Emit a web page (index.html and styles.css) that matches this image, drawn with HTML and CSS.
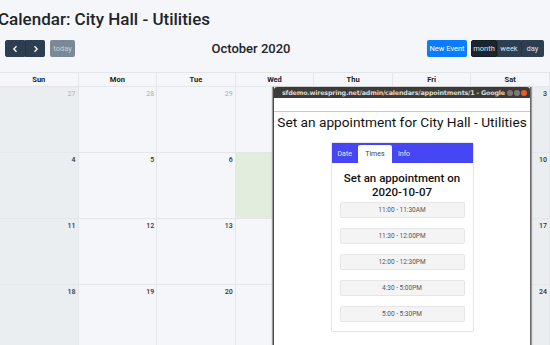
FILE: index.html
```html
<!DOCTYPE html>
<html lang="en">
<head>
  <meta charset="UTF-8">
  <title>Calendar: City Hall - Utilities</title>
  <link rel="stylesheet" href="styles.css">
</head>
<body>

  <h1 class="page-title">Calendar: City Hall - Utilities</h1>

  <div class="toolbar">
    <div class="tb-left">
      <div class="btn-group">
        <button class="btn btn-dark">
          <svg width="7" height="8" viewBox="0 0 7 8"><path d="M4.5 1.2 L1.8 4 L4.5 6.8" fill="none" stroke="#fff" stroke-width="1.3"/></svg>
        </button>
        <button class="btn btn-dark">
          <svg width="7" height="8" viewBox="0 0 7 8"><path d="M2.5 1.2 L5.2 4 L2.5 6.8" fill="none" stroke="#fff" stroke-width="1.3"/></svg>
        </button>
      </div>
      <button class="btn btn-today">today</button>
    </div>
    <h2 class="cal-title">October 2020</h2>
    <div class="tb-right">
      <button class="btn btn-primary">New Event</button>
      <div class="btn-group view-group">
        <button class="btn btn-dark active">month</button>
        <button class="btn btn-dark">week</button>
        <button class="btn btn-dark">day</button>
      </div>
    </div>
  </div>

  <div class="calendar">
    <div class="dow">Sun</div>
    <div class="dow">Mon</div>
    <div class="dow">Tue</div>
    <div class="dow">Wed</div>
    <div class="dow">Thu</div>
    <div class="dow">Fri</div>
    <div class="dow">Sat</div>

    <div class="day weekend other">27</div>
    <div class="day other">28</div>
    <div class="day other">29</div>
    <div class="day other">30</div>
    <div class="day">1</div>
    <div class="day">2</div>
    <div class="day weekend">3</div>

    <div class="day weekend">4</div>
    <div class="day">5</div>
    <div class="day">6</div>
    <div class="day today">7</div>
    <div class="day">8</div>
    <div class="day">9</div>
    <div class="day weekend">10</div>

    <div class="day weekend">11</div>
    <div class="day">12</div>
    <div class="day">13</div>
    <div class="day">14</div>
    <div class="day">15</div>
    <div class="day">16</div>
    <div class="day weekend">17</div>

    <div class="day weekend">18</div>
    <div class="day">19</div>
    <div class="day">20</div>
    <div class="day">21</div>
    <div class="day">22</div>
    <div class="day">23</div>
    <div class="day weekend">24</div>
  </div>

  <!-- popup browser window -->
  <div class="popup">
    <div class="popup-bar">
      <span class="popup-url">sfdemo.wirespring.net/admin/calendars/appointments/1 - Google Chrome</span>
      <span class="win-btn"></span>
      <span class="win-btn"></span>
      <span class="win-btn close"></span>
    </div>
    <div class="popup-strip"></div>
    <div class="popup-body">
      <h2 class="appt-title">Set an appointment for City Hall - Utilities</h2>
      <div class="card">
        <div class="tabs">
          <span class="tab">Date</span>
          <span class="tab active">Times</span>
          <span class="tab">Info</span>
        </div>
        <div class="card-body">
          <h3 class="card-title">Set an appointment on<br>2020-10-07</h3>
          <div class="slot">11:00 - 11:30AM</div>
          <div class="slot">11:30 - 12:00PM</div>
          <div class="slot">12:00 - 12:30PM</div>
          <div class="slot">4:30 - 5:00PM</div>
          <div class="slot">5:00 - 5:30PM</div>
        </div>
      </div>
    </div>
  </div>

</body>
</html>
```

FILE: styles.css
```css
body {
  margin: 0;
  width: 550px;
  height: 345px;
  overflow: hidden;
  position: relative;
  font-family: Roboto, "Liberation Sans", sans-serif;
  background-color: #f5f6fa;
  color: #212529;
}
.page-title {
  margin: 8px 0 0 -2px;
  font-size: 17px;
  line-height: 22px;
  font-weight: 500;
}
.toolbar {
  display: flex;
  justify-content: space-between;
  align-items: center;
  margin-top: 10px;
  padding: 0 6px 0 5px;
  height: 17px;
}
.tb-left, .tb-right {
  display: flex;
  gap: 5px;
}
.tb-right {
  gap: 4px;
}
.btn-group {
  display: flex;
}
.btn {
  height: 17px;
  border: 1px solid transparent;
  border-radius: 2px;
  font-family: Roboto, "Liberation Sans", sans-serif;
  font-size: 7.5px;
  padding: 0;
  color: #fff;
  display: flex;
  align-items: center;
  justify-content: center;
}
.btn-dark {
  background-color: #2c3e50;
  border-color: #2c3e50;
  color: #dfe3e8;
}
.btn-group .btn {
  border-radius: 0;
}
.btn-group .btn:first-child {
  border-radius: 2px 0 0 2px;
}
.btn-group .btn:last-child {
  border-radius: 0 2px 2px 0;
}
.btn-group .btn + .btn {
  border-left-color: #243444;
}
.tb-left .btn-dark {
  width: 20px;
}
.view-group .btn:nth-child(1) {
  width: 26px;
}
.view-group .btn:nth-child(2) {
  width: 24px;
}
.view-group .btn:nth-child(3) {
  width: 23px;
}
.btn-dark.active {
  background-color: #1a252f;
  border-color: #151e26;
}
.btn-today {
  background-color: #7b8896;
  color: #c9cfd6;
  width: 25px;
}
.btn-primary {
  background-color: #0a7cff;
  color: #fff;
  width: 40px;
}
.cal-title {
  margin: 0;
  font-size: 13px;
  font-weight: 500;
}
.calendar {
  display: grid;
  grid-template-columns: repeat(7, 1fr);
  grid-template-rows: 14px;
  grid-auto-rows: 66px;
  margin-top: 15px;
  border-top: 1px solid #e4e6ea;
}
.dow {
  font-size: 7.5px;
  font-weight: 700;
  text-align: center;
  line-height: 13px;
  border-right: 1px solid #e4e6ea;
  border-bottom: 1px solid #e4e6ea;
  color: #222;
}
.day {
  font-size: 7px;
  font-weight: 500;
  text-align: right;
  padding: 3px 2px 0 0;
  border-right: 1px solid #e4e6ea;
  border-bottom: 1px solid #e4e6ea;
  color: #333;
}
.day.weekend {
  background-color: #ebeef0;
}
.day.other {
  color: #b8bcc2;
}
.day.today {
  background-color: #e3eddd;
}

/* popup window */
.popup {
  position: absolute;
  left: 273px;
  top: 87px;
  width: 256px;
  height: 270px;
  background-color: #fff;
  border-left: 1px solid #4a4945;
  border-right: 1px solid #6a6a6a;
  box-shadow: -1px 0 1px #9a9a9a, 1px 0 1px #9a9a9a;
}
.popup-bar {
  display: flex;
  align-items: center;
  height: 11px;
  background-color: #3c3b37;
  padding: 0 3px 0 8px;
  border-radius: 3px 3px 0 0;
}
.popup-url {
  flex: 1;
  overflow: hidden;
  white-space: nowrap;
  font-family: "DejaVu Sans", sans-serif;
  font-size: 6.4px;
  font-weight: 700;
  letter-spacing: -0.2px;
  color: #dcd9d2;
}
.win-btn {
  width: 6px;
  height: 6px;
  border-radius: 50%;
  background-color: #7a7975;
  margin-left: 1px;
}
.win-btn.close {
  background-color: #ea5b26;
}
.popup-strip {
  height: 13px;
  border-bottom: 1px solid #c8c8c8;
}
.popup-body {
  padding-top: 1px;
}
.appt-title {
  margin: 0;
  font-size: 13.7px;
  line-height: 18px;
  font-weight: 400;
  text-align: center;
  color: #111;
}
.card {
  width: 141px;
  margin: 11px auto 0;
  border: 1px solid #e6e6e6;
  border-radius: 2px;
}
.tabs {
  display: flex;
  align-items: flex-end;
  height: 20px;
  background-color: #4646f5;
}
.tab {
  font-size: 7px;
  color: #e8e8ff;
  padding: 0 6px;
  line-height: 18px;
}
.tab.active {
  background-color: #fff;
  color: #444;
  width: 34px;
  padding: 0;
  text-align: center;
  border-radius: 2px 2px 0 0;
}
.card-body {
  padding: 8px 8px 9px;
}
.card-title {
  margin: 0 0 3px;
  font-size: 11.5px;
  line-height: 14px;
  font-weight: 500;
  text-align: center;
  color: #111;
}
.slot {
  height: 14px;
  line-height: 14px;
  margin-bottom: 10px;
  background-color: #f4f4f4;
  border: 1px solid #e6e6e6;
  border-radius: 2px;
  font-size: 6.5px;
  color: #555;
  text-align: center;
}
.slot:last-child {
  margin-bottom: 0;
}
```
